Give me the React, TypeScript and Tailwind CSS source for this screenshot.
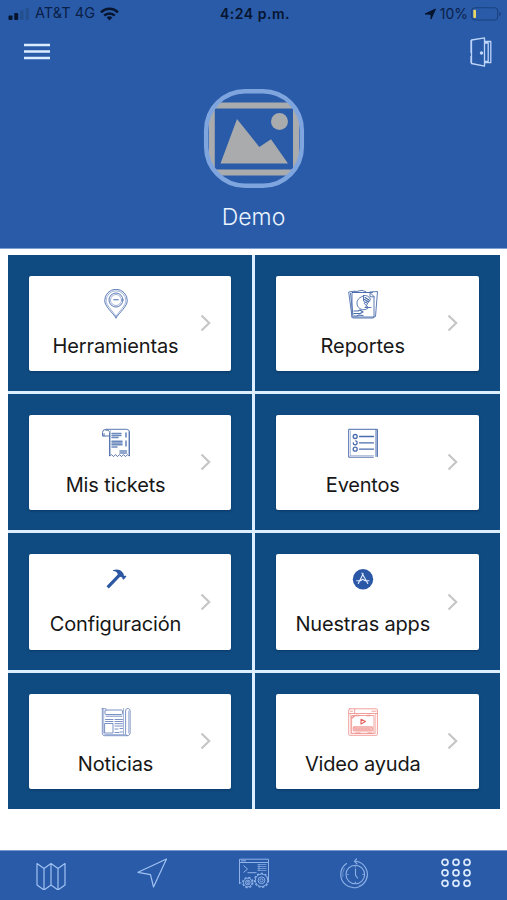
import type { ReactNode } from 'react';

const INK = '#4a6cac';

function Glyph({ children, color = INK, width = 0.9 }: { children: ReactNode; color?: string; width?: number }) {
  return (
    <svg
      className="h-[30px] w-[30px] shrink-0"
      viewBox="0 0 30 30"
      fill="none"
      stroke={color}
      strokeWidth={width}
      strokeLinejoin="round"
      strokeLinecap="round"
    >
      {children}
    </svg>
  );
}

const pin = (
  <Glyph>
    <path d="M15 28.800C11.500 23.500 3.700 17.300 3.700 11.600a11.300 11.300 0 0 1 22.600 0C26.300 17.300 18.500 23.500 15 28.800Z" />
    <path d="M15 27.200C11 21.300 5.200 16.300 5.200 11.600a9.800 9.800 0 0 1 19.600 0C24.800 16.300 19 21.300 15 27.200Z" strokeWidth="0.500" />
    <circle cx="15" cy="11" r="7" />
    <circle cx="15" cy="11" r="5.500" strokeWidth="0.500" />
    <path d="M12.800 10.700h4.400" strokeWidth="1.100" />
  </Glyph>
);

const reports = (
  <Glyph>
    <path d="M4 28.500V3.500h18l4 4v20.500H4.500" />
    <path d="M4 27.500 0.700 3 7 2.100M6 3 14 1.300l4 1.500M4.500 3.500h20M22 3 29.500 2.500 27.500 27.500 25 29H5M22 3.500v4.300h4M2.500 4.500 5 26" />
    <path d="M14.500 7.500a6.700 6.700 0 1 0 6 11.200l-4.500-4.500 5-2.200" />
    <path d="M15.500 6.500v5.500l4 2.500 3-4a6 6 0 0 0-7-4ZM19.500 14.500l-2 4M17 18.500h6" />
    <path d="M17 8.500 21 11M16.500 10.500l3.500 2" strokeWidth="1.200" />
    <path d="M6 22h4l2-1 3 2M6 24.500h6l2-1M6 27h3l2-1 4 .5" strokeWidth="1.200" />
  </Glyph>
);

const tickets = (
  <Glyph color="#6d8abf">
    <path d="M8 8H1.500V4.500A3.400 3.400 0 0 1 5 1.300h20.500A3 3 0 0 1 28.500 4v24l-2-1.300-2 1.800-2-1.800-2 1.800-2-1.800-2 1.800-2-1.800-2 1.800-2-1.800-2 1.300V4.500c0-2-2-3-3.500-2.200M3 8V5.500" stroke="#4868a6" />
    <path d="M11 5.500h9M11 7.500h9M11 9.500h6M11 13.200h10M11 15h10M11 16.800h10M11 19h5" strokeWidth="1.500" />
    <path d="M25 5v4M25 13v5M19 23h6.500M19 25h6.500" strokeWidth="1.600" />
    <path d="M9.500 2.500v24M27.500 4v22" strokeWidth="0.500" />
  </Glyph>
);

const events = (
  <Glyph width={1}>
    <path d="M29.400 28.500V1.300H.7v27.900h24.600M28 2v26.500" />
    <path d="M11.500 8.500h14M11.500 14.800h14M11.500 21.200h14" strokeWidth="1.300" />
    <circle cx="7.200" cy="8.500" r="2" strokeWidth="1.300" />
    <path d="M5.200 14.800a2 2 0 1 0 2.500-1.900" strokeWidth="1.300" />
    <circle cx="7.200" cy="21.200" r="2" strokeWidth="1.300" />
    <path d="M2.500 27.500h23M2.500 3v24" strokeWidth="0.400" />
  </Glyph>
);

const hammer = (
  <Glyph color="none">
    <path
      fill="#2d57a3"
      d="M12 3.300c4-1.400 7-.5 9 1.500l1.600 2c.2 1.200 0 1.800.7 2.100l1-.4 1.100 1-2.800 3.200-1.200-1c.3-1-.2-1.500-1-1.500l-1.300-.4L7.800 21.500 5.500 19.300 16.800 7.500c-.3-1.800-1.800-3.200-4.800-3.400Z"
    />
  </Glyph>
);

const apps = (
  <Glyph color="#e5efff" width={1.1}>
    <circle cx="15" cy="12.200" r="10.200" fill="#2b58a6" stroke="none" />
    <path d="m10.300 16.500 4.900-9.800M14 6.200l5.800 10.300M8.800 13.700h3.800l2-1.400 2.600 1.400h3.700" />
  </Glyph>
);

const news = (
  <Glyph color="#6c86c0">
    <path d="M1.300 1.500v24.800c0 1.500 1 2.400 2.500 2.400h22.500c1.600 0 2.800-1.200 2.800-2.800V4c0-1.700-.9-2.500-2.200-2.500s-2.300.8-2.300 2.500v22.200c0 1.500.7 2.300 1.700 2.300" />
    <path d="M2.700 1.500v24.500c0 1 .5 1.500 1.500 1.500H24M27.700 4v22M22.500 1.500V27M1 1.500h4" strokeWidth="0.600" />
    <rect x="4" y="3" width="17.500" height="4.500" rx="1" />
    <path d="M5 9.200h16M4.500 12.500h7.500M14 12.500h7.500M4.500 14.500h7.500M14 14.500h7.500M14 16.700h7.500M14 19h7.500M14 22h3M19 21.500h2.500M14 25.500h4M19 25h2.500" />
    <rect x="4" y="16.500" width="8" height="9.500" />
  </Glyph>
);

const video = (
  <Glyph color="#f09591" width={0.9}>
    <rect x="0.700" y="1.800" width="28.700" height="26.500" rx="1" />
    <path d="M1 6.500h28M6.700 2v4.500M24 4.200h4M2.500 4.200h2" />
    <path d="M2.500 7v19.500h25V7" strokeWidth="0.500" />
    <rect x="4" y="8.500" width="22" height="17.800" />
    <path d="m4 11 3-2.500M8 8.500h3M19 8.500h3M8 26.300h4M20 26.300h4" strokeWidth="1.600" />
    <rect x="5.200" y="19.800" width="19.600" height="4.200" rx="1" fill="#f7c4c1" />
    <path d="M7 22h16" strokeDasharray="2 1.200" />
    <path d="m13 12.200 4.500 2.400-4.500 2.400Z" stroke="#e5605c" strokeWidth="1.100" />
  </Glyph>
);

const tiles = [
  { label: 'Herramientas', icon: pin, spacing: 'tracking-[-0.12px]' },
  { label: 'Reportes', icon: reports, spacing: 'tracking-[-0.07px]' },
  { label: 'Mis tickets', icon: tickets, spacing: 'tracking-[-0.12px]' },
  { label: 'Eventos', icon: events, spacing: 'tracking-[-0.2px]' },
  { label: 'Configuración', icon: hammer, spacing: 'tracking-[-0.17px]' },
  { label: 'Nuestras apps', icon: apps, spacing: 'tracking-[-0.17px]' },
  { label: 'Noticias', icon: news, spacing: 'tracking-[-0.12px]' },
  { label: 'Video ayuda', icon: video, spacing: 'tracking-[-0.2px]' },
];

function StatusBar() {
  return (
    <div className="grid h-[27px] grid-cols-[1fr_auto_1fr] items-center pr-[5px] pl-[8px] text-[14px] leading-none text-[#0a2048]">
      <div className="flex items-center">
        <svg className="h-[14px] w-[22px]" viewBox="0 0 22 14">
          <rect x="0.500" y="8.500" width="4" height="4.500" rx="1" fill="#07152f" />
          <rect x="6.200" y="6" width="4" height="7" rx="1" fill="#07152f" />
          <rect x="12" y="3.500" width="3.500" height="9.500" rx="1" fill="#24508f" />
          <rect x="17.500" y="1" width="3.500" height="12" rx="1" fill="#24508f" />
        </svg>
        <span className="ml-[5px] text-[14.500px] tracking-[0.050px] whitespace-nowrap">AT&amp;T 4G</span>
        <svg className="ml-[5px] h-[14px] w-[19px]" viewBox="0 0 19 14" fill="none" stroke="#07152f" strokeWidth="2.500">
          <path d="M1 5.300a12.200 12.200 0 0 1 17 0M4.200 8.700a7.600 7.600 0 0 1 10.600 0" />
          <path d="m9.500 13.500-2.800-2.900a4 4 0 0 1 5.600 0Z" fill="#07152f" stroke="none" />
        </svg>
      </div>
      <span className="text-[14px] font-semibold tracking-[0.500px] whitespace-nowrap text-[#07152f]">4:24 p.m.</span>
      <div className="flex items-center justify-end">
        <svg className="h-[12px] w-[12px]" viewBox="0 0 12 12">
          <path d="M11.500 1 7 11V6.300L1 6Z" fill="#07152f" stroke="#07152f" strokeLinejoin="round" />
        </svg>
        <span className="ml-[4px] text-[14px]">10%</span>
        <svg className="ml-[3px] h-[14px] w-[31px]" viewBox="0 0 31 14" fill="none">
          <rect x="0.700" y="0.700" width="26" height="12.300" rx="3.500" stroke="#1b427f" strokeWidth="1.100" />
          <rect x="2.300" y="2.700" width="2.700" height="8.300" rx="0.800" fill="#e8d765" />
          <path d="M28.300 4.700v4.500c2-.7 2-3.700 0-4.500Z" fill="#1b427f" />
        </svg>
      </div>
    </div>
  );
}

function Header() {
  return (
    <header className="flex h-[249px] shrink-0 flex-col border-b border-[#7f9fd0] bg-[#2a5ba8]">
      <StatusBar />
      <div className="flex h-[49px] items-center justify-between pr-[15px] pl-[24px]">
        <svg className="h-[17px] w-[26px]" viewBox="0 0 26 17" stroke="#dcecff" strokeWidth="2.400">
          <path d="M0 2h26M0 8.500h26M0 15h26" />
        </svg>
        <svg className="h-[30px] w-[22px]" viewBox="0 0 22 30" fill="none" stroke="#bdd5fa" strokeWidth="1.300" strokeLinejoin="round">
          <path d="M14.500.8 1.500 3v23.500l13 2.700ZM1 3v13M1 19v7" />
          <path d="M14.500 4.500h6.300v21.200h-6.300M14.500 6h3.700v18.500h-3.700" />
          <circle cx="11.500" cy="16" r="1.100" fill="#e5f0ff" />
        </svg>
      </div>
      <div className="flex flex-col items-center pt-[11.500px]">
        <svg className="h-[101px] w-[102px]" viewBox="0 0 102 101">
          <clipPath id="badge">
            <rect x="1" y="1" width="100" height="99" rx="42" />
          </clipPath>
          <g clipPath="url(#badge)">
            <path fill="#a9abad" fillRule="evenodd" d="M6 14.500h90v73H6ZM11.800 20.500V81.500H90V20.500Z" />
          </g>
          <path fill="#a9abad" d="M17.500 75.500 34 31l22.300 28L68 51.200l17 24.300Z" />
          <circle cx="76.500" cy="33.500" r="8.500" fill="#a9abad" />
          <rect x="3.200" y="3.200" width="95.600" height="94.600" rx="39" fill="none" stroke="#7fa5df" strokeWidth="4.500" />
        </svg>
        <h1 className="mt-[12.500px] text-[23px] leading-[32px] font-light text-[#eaf4ff]">Demo</h1>
      </div>
    </header>
  );
}

function Tile({ label, icon, spacing }: { label: string; icon: ReactNode; spacing: string }) {
  return (
    <div className="flex bg-[#0f4a80] px-[21px] pt-[21px] pb-[20px]">
      <div className="flex min-w-0 flex-1 rounded-[2px] bg-white shadow-[0_1px_2px_rgba(0,20,50,0.3)]">
        <div className="flex w-[173px] shrink-0 flex-col items-center pt-[13px]">
          {icon}
          <span className={`mt-[13px] text-[20px] leading-[28px] whitespace-nowrap text-[#171717] ${spacing}`}>{label}</span>
        </div>
        <svg className="mt-[38.500px] -ml-[2px] h-[18px] w-[11px]" viewBox="0 0 11 18" fill="none" stroke="#c6c6c8" strokeWidth="2.200">
          <path d="m1.500 1.500 7.700 7.500-7.700 7.500" />
        </svg>
      </div>
    </div>
  );
}

const dots = [4, 15, 26];

function Gear({ cx, cy, r }: { cx: number; cy: number; r: number }) {
  return (
    <g>
      <circle cx={cx} cy={cy} r={r} fill="#2a5ba8" />
      <circle cx={cx} cy={cy} r={r + 0.8} strokeWidth="1.300" strokeDasharray="2.200 1.800" />
      <circle cx={cx} cy={cy} r={r * 0.55} />
      <circle cx={cx} cy={cy} r={r * 0.25} />
    </g>
  );
}

function BottomBar() {
  const line = 'shrink-0 h-[32px] w-[32px]';
  return (
    <nav className="flex h-[50px] shrink-0 justify-between border-t border-[#7598cd] bg-[#2a5ba8] pt-[7px] pr-[35px] pl-[35px]">
      <svg className={line} viewBox="0 0 32 32" fill="none" stroke="#a0c2f3" strokeWidth="1.200" strokeLinejoin="round">
        <path d="m2 5.500 7 5 7-5 7 5 7-5v21.500l-7 5-7-5-7 5-7-5ZM9 10.500v21.500M16 5.500V27M23 10.500v21.500" />
      </svg>
      <svg className={line} viewBox="0 0 32 32" fill="none" stroke="#a0c2f3" strokeWidth="1.200" strokeLinejoin="round">
        <path d="M30.500 1 2 14.300l12.500 2.400L17.500 29Z" />
      </svg>
      <svg className={line} viewBox="0 0 32 32" fill="none" stroke="#8fb2e8" strokeWidth="1">
        <path d="M1.500 26V1.200h29V24M1.500 4.500h29M3 2.800h5M1.500 25h2M5.500 7.500l4 3.500-4 3.500M9.500 14.700h9" />
        <path d="M19.500 6.500h9M19.500 8.500h9M19.500 10.500h9M19.500 12.500h9M21 6v7" strokeWidth="0.700" />
        <Gear cx={9.8} cy={24.5} r={4.3} />
        <Gear cx={23.5} cy={22.3} r={6.2} />
      </svg>
      <svg className={line} viewBox="0 0 32 32" fill="none" stroke="#8fb2e8" strokeWidth="1.100" strokeLinecap="round">
        <path d="M7.500 5.500A13.300 13.300 0 1 0 17 3.300M15.500 3.300l2-2.500M15.500 3.300l2.500 2.500" />
        <path d="M5.300 10.500a11.900 11.900 0 0 0-1.600 8.300M28 18A12 12 0 0 1 20 28" strokeWidth="0.600" />
        <circle cx="16.300" cy="16.500" r="9.300" />
        <path d="M16.500 11v6l2 3M16.300 8.500V9M16.300 24v.5M8.700 16.500h.5M23.800 16.500h.5" />
      </svg>
      <svg className={line} viewBox="0 0 32 32" fill="none" stroke="#dcebff" strokeWidth="1.700">
        {dots.map((y) => dots.map((x) => <circle key={`${x}-${y}`} cx={x + 1} cy={y * 0.955 + 0.5} r="3" />))}
      </svg>
    </nav>
  );
}

export default function App() {
  return (
    <div className="flex h-[900px] w-[507px] flex-col overflow-hidden bg-white font-['Inter','Liberation_Sans',sans-serif]">
      <Header />
      <main className="flex-1 pt-[5.500px] pl-[8px]">
        <div className="grid h-[554.500px] w-[491.500px] grid-cols-2 grid-rows-4 gap-[3px] bg-[#dceeff]">
          {tiles.map((tile) => (
            <Tile key={tile.label} {...tile} />
          ))}
        </div>
      </main>
      <BottomBar />
    </div>
  );
}
